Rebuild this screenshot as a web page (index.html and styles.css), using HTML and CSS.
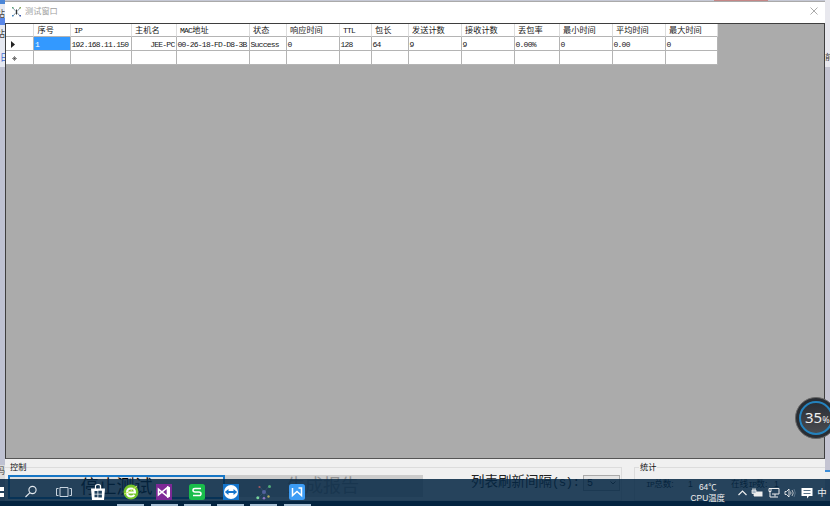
FILE: index.html
```
<!DOCTYPE html>
<html lang="zh-CN">
<head>
<meta charset="utf-8">
<title>测试窗口</title>
<link rel="stylesheet" href="styles.css">
</head>
<body>
<div class="desktop">
  <div class="behind-left"><i class="blue-a"></i><span class="l1">站</span><i class="blue-b"></i><span class="l2">站</span><span class="l3">日</span><span class="l4">码</span></div>
  <div class="behind-right"><span>前</span></div>
  <i class="red-edge"></i>
  <main class="window">
    <header class="titlebar">
      <svg class="logo" width="11" height="11" viewBox="0 0 11 11"><path d="M2 2 9 10M9 2 2 10" stroke="#6c8598" stroke-width=".8" fill="none"/><path d="M5.500 3.500v5" stroke="#333"/><path d="M1 1h1.500v1.500H1z" fill="#58a178"/><path d="M8.500 1H10v1.500H8.500z" fill="#86a858"/><path d="M1 9h1.500v1.500H1z" fill="#4385bf"/><path d="M8.500 9H10v1.500H8.500z" fill="#4059ad"/></svg>
      <h1>测试窗口</h1>
      <svg class="close" width="8" height="8" viewBox="0 0 8 8"><path d="M.5.5l7 7m0-7-7 7" stroke="#969696" stroke-width=".8"/></svg>
    </header>
    <section class="grid-area">
      <div class="grid">
        <div class="row head"><b></b><b>序号</b><b class="m">IP</b><b>主机名</b><b><span class="m">MAC</span>地址</b><b>状态</b><b>响应时间</b><b class="m">TTL</b><b>包长</b><b>发送计数</b><b>接收计数</b><b>丢包率</b><b>最小时间</b><b>平均时间</b><b>最大时间</b></div>
        <div class="row data"><b class="mark"><svg width="4" height="7" viewBox="0 0 4 7"><path d="M0 0l4 3.500L0 7z" fill="#222"/></svg></b><b class="selected">1</b><b>192.168.11.150</b><b class="right">JEE-PC</b><b>00-26-18-FD-D8-3B</b><b>Success</b><b>0</b><b>128</b><b>64</b><b>9</b><b>9</b><b>0.00%</b><b>0</b><b>0.00</b><b>0</b></div>
        <div class="row data"><b class="mark star"><svg width="5" height="5" viewBox="0 0 5 5"><path d="M2.500 0v5M0 2.500h5M1 1l3 3M4 1 1 4" stroke="#444" stroke-width=".6"/></svg></b><b></b><b></b><b></b><b></b><b></b><b></b><b></b><b></b><b></b><b></b><b></b><b></b><b></b><b></b></div>
      </div>
    </section>
    <footer class="panels">
      <fieldset class="control"><legend>控制</legend>
        <div class="controls"><div class="stop">停止测试</div><div class="report">生成报告</div><span class="interval">列表刷新间隔<span class="paren">(s):</span></span><div class="select">5<svg width="6" height="4" viewBox="0 0 6 4"><path d="M.5.5 3 3 5.500.5" fill="none" stroke="#444"/></svg></div></div>
      </fieldset>
      <fieldset class="stats"><legend>统计</legend><div class="counts"><span class="total"><span class="m">IP</span>总数:</span><span class="n1">1</span><span class="online">在线<span class="m">IP</span>数:</span><span>1</span></div></fieldset>
    </footer>
  </main>
  <nav class="taskbar">
    <i class="start"></i>
    <div class="apps">
      <div><svg width="18" height="18" viewBox="0 0 18 18"><g fill="none" stroke="#e4eaf0" stroke-width="1.1"><circle cx="10.5" cy="7" r="3.6"/><path d="M8 9.700 3.500 14"/></g></svg></div>
      <div><svg width="18" height="18" viewBox="0 0 18 18"><g fill="none" stroke="#c8d4df"><path d="M5 4.500h8v9H5zM3.500 5.500h-2v7h2M14.500 5.500h2v7h-2"/></g></svg></div>
      <div><svg width="18" height="18" viewBox="0 0 18 18"><path d="M2 5.500h14L15 17H3z" fill="#fff"/><path d="M6.500 6V3.200q0-1.700 2.500-1.700t2.500 1.700V6" fill="none" stroke="#fff" stroke-width="1.200"/><path d="M5.500 8h3v2.700h-3zM9.300 7.800h3.600v2.900H9.300zM5.500 11.500h3v2.700h-3zM9.300 11.500h3.600v3H9.300z" fill="#21425e"/></svg></div>
      <div class="open"><svg width="18" height="18" viewBox="0 0 18 18"><circle cx="9" cy="9" r="7.500" fill="#73c52b"/><path d="M5 9.500h8q0-4-4-4t-4 4 4 4q2 0 3.500-1.500" fill="none" stroke="#fff" stroke-width="2"/><path d="M2 11Q9 9 15 3" fill="none" stroke="#d6e76c"/></svg></div>
      <div class="open"><svg width="18" height="18" viewBox="0 0 18 18"><path d="M1 1h16v16H1z" fill="#7d2996"/><path d="M3.500 6.200v5.600L12.500 4.500v9z" fill="none" stroke="#fff" stroke-width="1.600"/><path d="M12 3l3 1.200v9.600L12 15z" fill="#fff"/></svg></div>
      <div class="open"><svg width="18" height="18" viewBox="0 0 18 18"><rect x="1" y="1" width="16" height="16" rx="2.500" fill="#19bd4b"/><path d="M13 5.500H7Q5 5.500 5 7.200T7 9h4q2 0 2 1.800t-2 1.700H5" fill="none" stroke="#fff" stroke-width="1.500"/></svg></div>
      <div class="open"><svg width="18" height="18" viewBox="0 0 18 18"><path d="M1 1h16v16H1z" fill="#1475cc"/><circle cx="9" cy="9" r="7" fill="#fff"/><path d="M2.800 9 6.500 6v2h5V6l3.700 3-3.700 3v-2h-5v2z" fill="#1475cc"/></svg></div>
      <div class="open"><svg width="18" height="18" viewBox="0 0 18 18"><g fill="none" stroke="#3d5873" stroke-width=".6"><path d="M5 4l4 5 5-6M9 9l-6 6M9 9v6M9 9l5 4"/></g><circle cx="9" cy="9" r="2" fill="#52619d"/><circle cx="4.500" cy="4" r="1.100" fill="#a05a62"/><circle cx="14.500" cy="3.500" r="1.500" fill="#52ad7b"/><circle cx="2.800" cy="14.800" r="1.500" fill="#77d49d"/><circle cx="9" cy="15.300" r="1.300" fill="#8b74c2"/><circle cx="13.500" cy="13.500" r="1.200" fill="#a8a75f"/></svg></div>
      <div class="open"><svg width="18" height="18" viewBox="0 0 18 18"><rect x="1" y="1" width="16" height="16" rx="2.500" fill="#3c9cf5"/><path d="M4.500 5v7.500L9 8.500l4.500 4V5h-3" fill="none" stroke="#fff" stroke-width="1.500"/></svg></div>
    </div>
    <div class="temp"><span>64℃</span><span>CPU温度</span></div>
    <div class="tray">
      <svg width="9" height="6" viewBox="0 0 9 6"><path d="M.5 5 4.500 1l4 4" fill="none" stroke="#eee" stroke-width="1.200"/></svg>
      <svg width="12" height="10" viewBox="0 0 12 10"><path d="M3 3.500h8.500v5H3z" fill="#eee"/><path d="M1 2h4v3.500H1zM2 0v2m2-2v2M3 5v3" fill="#a9b8c5" stroke="#eee" stroke-width=".8"/></svg>
      <svg width="12" height="11" viewBox="0 0 12 11"><path d="M3 1.500h8v5.500H4M1 1.500h2v3H1zM2 5v5h3m2-3v2.500m-2 .5h5" fill="none" stroke="#eee"/></svg>
      <svg width="12" height="10" viewBox="0 0 12 10"><path d="M1 3.500h1.500L5 1v8L2.500 6.500H1z" fill="none" stroke="#eee" stroke-width=".9"/><path d="M6.500 3.500q1 1.500 0 3M8 2q2.500 3 0 6" fill="none" stroke="#ddd" stroke-width=".8"/><path d="M10 1q2.500 4 0 8" fill="none" stroke="#687f94" stroke-width=".8"/></svg>
      <svg width="12" height="12" viewBox="0 0 12 12"><path d="M.5 1h11v8H8l-2 2.500V9H.5z" fill="#fff"/><path d="M2.500 3.500h7m-7 3h7" stroke="#45627b" stroke-width=".9"/></svg>
      <span>中</span>
    </div>
  </nav>
  <div class="gauge"><div>35<small>%</small></div></div>
</div>
</body>
</html>
```
FILE: styles.css
```
* { box-sizing: border-box; }
body { margin: 0; overflow: hidden; font-family: "Liberation Sans", "Noto Sans CJK SC", sans-serif; }
.desktop { position: relative; width: 830px; height: 506px; overflow: hidden; background: #c5c8d5; }
.desktop i { display: block; }
.desktop::before { content: ""; position: absolute; left: 0; right: 0; top: 501px; height: 5px; background: #00152b; }
.behind-left { position: absolute; left: 0; top: 0; width: 5px; height: 479px; overflow: hidden; background: linear-gradient(#e6e9f2 67px, #bfc2d2 67px 465px, #ddd 465px); font-size: 9px; line-height: 10px; color: #444; }
.behind-left span, .behind-left i { position: absolute; right: 0; }
.blue-a { top: 0; width: 5px; height: 4px; background: #4b86d8; }
.blue-b { top: 18px; width: 5px; height: 7px; background: #5a87e8; }
.l1 { top: 9px; }
.l2 { top: 29px; }
.behind-left .l3 { top: 53px; left: 0; right: auto; color: #3f6ad0; }
.l4 { top: 466px; }
.behind-right { position: absolute; left: 825px; top: 0; width: 5px; height: 479px; overflow: hidden; background: linear-gradient(#e8e8ee 67px, #c4c4d2 67px 470px, #3c8cd6 470px 472px, #eee 472px); }
.behind-right span { position: absolute; top: 53px; font-size: 8px; line-height: 10px; color: #333; }
.desktop .red-edge { position: absolute; left: 714px; top: 0; width: 54px; height: 1px; background: #c58686; }
.window { position: absolute; left: 5px; top: 1px; width: 820px; height: 500px; background: #f0f0f0; border-top: 1px solid #aaa; display: flex; flex-direction: column; }
.titlebar { height: 21px; background: #fff; display: flex; align-items: center; padding: 0 7px 3px 6px; }
h1 { margin: 0 auto 0 3px; font-size: 8.2px; line-height: 11px; font-weight: 400; color: #a0a0a0; }
.close { display: block; }
.grid-area { height: 436px; background: #ababab; border: 1px solid #3e3e3e; border-top-width: 1.5px; border-bottom-color: #555; }
.grid { width: 712px; }
.row { display: grid; grid-template-columns: 28px 36.5px 61px 45px 73px 37px 53px 32px 37px 53px 53px 45px 53px 53px 52.5px; height: 13px; background: #fff; }
.row.data { height: 14px; }
.row b { min-width: 0; display: flex; align-items: center; font-weight: 400; border-right: 1px solid #b4b4b4; border-bottom: 1px solid #b4b4b4; white-space: pre; color: #202020; }
.head b { padding-left: 3.5px; font-size: 8.2px; line-height: 11px; border-right-color: #ddd; }
.data b, .row .m, .m { font-family: "Liberation Mono", "Noto Sans CJK SC", monospace; font-size: 8px; letter-spacing: -.74px; }
.row b.m { padding-top: 1px; }
.data b { padding: 2px 0 0 1px; }
.data b.mark { padding: 1px 0 0 5px; }
.data b.star { padding-left: 6px; }
.data b.right { justify-content: flex-end; padding-right: 1px; }
.data b.selected { background: #3399ff; color: #fff; }
.panels { flex: 1; display: flex; padding-top: 2px; }
fieldset { min-width: 0; margin: 0; padding: 0; border: 1px solid #dcdcdc; }
.control { width: 617px; border-left: 0; }
.stats { width: 191px; margin-left: 12px; border-right: 0; }
legend { margin-left: 4px; padding: 0 1px; font-size: 8.2px; line-height: 13px; color: #111; }
.control legend { margin-left: 5px; padding: 0; }
.controls { display: flex; height: 24px; padding-left: 3px; margin-top: 1px; font-size: 18px; line-height: 24px; }
.stop { width: 217px; height: 24px; border: 2px solid #1776c5; background: #e1e1e1; text-align: center; line-height: 21px; color: #000; }
.report { width: 198px; height: 22px; padding-left: 62px; background: #ccc; color: #939393; line-height: 22px; }
.controls .interval { margin-left: 48px; font-size: 13.5px; line-height: 13px; color: #222; white-space: nowrap; width: 112px; }
.paren { font-family: "Liberation Mono", monospace; font-size: 12.5px; letter-spacing: -.7px; }
.select { width: 37px; height: 16px; border: 1px solid #aaa; background: #e3e3e3; font: 10px/15px "Liberation Mono", monospace; padding: 0 3px; display: flex; justify-content: space-between; align-items: center; }
.counts { display: flex; padding: 4px 0 0 11px; font-size: 8.6px; line-height: 13px; color: #111; }
.total { width: 42px; }
.n1 { width: 43px; }
.online { width: 43px; }
.taskbar { position: absolute; left: 0; top: 479px; width: 830px; height: 27px; background: rgba(5, 38, 68, .86); display: flex; color: #eee; }
.start { width: 4px; height: 10px; margin-top: 8px; background: linear-gradient(#fff 4px, #24435e 4px 6px, #fff 6px); }
.apps { margin-left: 10.5px; display: grid; grid-template-columns: repeat(9, 33.25px); height: 27px; }
.apps div { display: flex; justify-content: center; padding-top: 4px; }
.apps .open { background: linear-gradient(#a6bfd4, #a6bfd4) center bottom / 27px 2px no-repeat; }
.apps svg, .tray svg { display: block; }
.temp { width: 40px; margin-left: 374px; padding-top: 3px; display: flex; flex-direction: column; align-items: center; font-size: 8.4px; line-height: 11px; white-space: nowrap; }
.tray { display: flex; align-items: center; height: 27px; margin-left: 10px; gap: 4.5px; }
.tray span { font-size: 9.5px; line-height: 12px; }
.gauge { position: absolute; left: 795px; top: 397px; width: 42px; height: 42px; border-radius: 50%; padding: 3px; background: #292d33; border: 1px solid #666; }
.gauge div { width: 34px; height: 34px; border: 2px solid #2482bd; border-radius: 50%; background: linear-gradient(#2b2e35, #484b50); color: #eee; padding-left: 4px; font: 15px/28px "Noto Sans", sans-serif; white-space: nowrap; }
.gauge small { font-size: 9px; }
```
